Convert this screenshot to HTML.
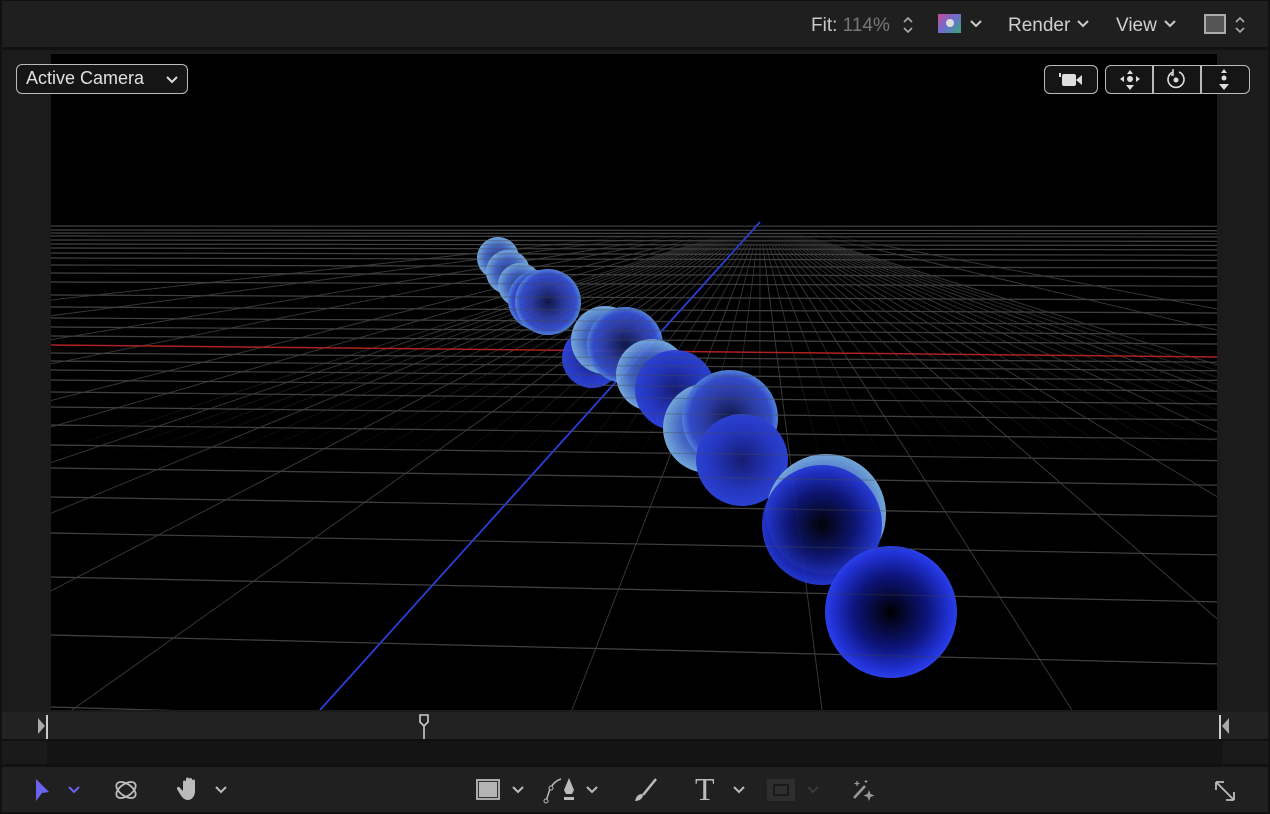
<!DOCTYPE html>
<html><head><meta charset="utf-8"><style>
*{margin:0;padding:0;box-sizing:border-box}
body{width:1270px;height:814px;background:#1d1d1d;position:relative;overflow:hidden;font-family:"Liberation Sans",sans-serif;color:#cfcfcf}
.abs{position:absolute}
</style></head><body>
<!-- top bar -->
<div class="abs" style="left:0;top:0;width:1270px;height:48px;background:#1f1f1f;border-top:1px solid #111;border-left:2px solid #111;border-right:2px solid #111"></div>
<div class="abs" style="left:0;top:47px;width:1270px;height:3px;background:#121212"></div>
<div class="abs" style="left:811px;top:15px;font-size:19px;color:#c9c9c9">Fit: <span style="color:#777">114%</span></div>
<svg class="abs" style="left:902px;top:15px" width="12" height="20"><path d="M2 7l4-4 4 4M2 13l4 4 4-4" stroke="#aaa" stroke-width="1.6" fill="none"/></svg>
<div class="abs" style="left:938px;top:14px;width:23px;height:19px;background:linear-gradient(135deg,#c54a9a,#6a6fd0 50%,#3aa87a)"></div>
<div class="abs" style="left:946px;top:19px;width:8px;height:8px;border-radius:50%;background:#ddd"></div>
<svg class="abs" style="left:969px;top:19px" width="14" height="10"><path d="M2 2l5 5 5-5" stroke="#ccc" stroke-width="2" fill="none"/></svg>
<div class="abs" style="left:1008px;top:15px;font-size:19px;color:#cfcfcf">Render</div>
<svg class="abs" style="left:1076px;top:19px" width="14" height="10"><path d="M2 2l5 5 5-5" stroke="#ccc" stroke-width="2" fill="none"/></svg>
<div class="abs" style="left:1116px;top:15px;font-size:19px;color:#cfcfcf">View</div>
<svg class="abs" style="left:1163px;top:19px" width="14" height="10"><path d="M2 2l5 5 5-5" stroke="#ccc" stroke-width="2" fill="none"/></svg>
<div class="abs" style="left:1204px;top:14px;width:22px;height:20px;border:2px solid #aaa;background:#555"></div>
<svg class="abs" style="left:1234px;top:15px" width="12" height="20"><path d="M2 7l4-4 4 4M2 13l4 4 4-4" stroke="#aaa" stroke-width="1.6" fill="none"/></svg>

<!-- viewer sides -->
<div class="abs" style="left:0;top:50px;width:1270px;height:662px;background:#1b1b1b;border-left:2px solid #111;border-right:2px solid #111"></div>
<svg class="abs" style="left:51px;top:54px" width="1166" height="656" viewBox="51 54 1166 656">
<defs>
<clipPath id="c"><rect x="51" y="224" width="1166" height="486"/></clipPath>
<clipPath id="cv"><rect x="51" y="232" width="1166" height="478"/></clipPath>
<linearGradient id="fade" gradientUnits="userSpaceOnUse" x1="0" y1="232" x2="0" y2="470"><stop offset="0" stop-color="#2e2e2e"/><stop offset="0.4" stop-color="#2c2c2c"/><stop offset="1" stop-color="#2c2c2c" stop-opacity="0"/></linearGradient>
<linearGradient id="topfade" x1="0" y1="0" x2="0" y2="1"><stop offset="0" stop-color="#000"/><stop offset="1" stop-color="#000" stop-opacity="0"/></linearGradient>
<radialGradient id="g1" cx="50%" cy="50%" r="50%"><stop offset="0" stop-color="#000"/><stop offset="0.55" stop-color="#0d147a"/><stop offset="0.9" stop-color="#2233d8"/><stop offset="1" stop-color="#2a40e8"/></radialGradient>
<radialGradient id="g2" cx="50%" cy="50%" r="50%"><stop offset="0" stop-color="#101a50"/><stop offset="0.5" stop-color="#3040b0"/><stop offset="0.85" stop-color="#3a55e0"/><stop offset="1" stop-color="#5a90f0"/></radialGradient>
<radialGradient id="g3" cx="50%" cy="50%" r="50%"><stop offset="0" stop-color="#2a3a90"/><stop offset="0.6" stop-color="#4a70d8"/><stop offset="1" stop-color="#80b8f0"/></radialGradient>
<radialGradient id="g4" cx="50%" cy="50%" r="50%"><stop offset="0" stop-color="#182080"/><stop offset="0.7" stop-color="#2a3ed8"/><stop offset="1" stop-color="#3048e8"/></radialGradient>
</defs>
<rect x="51" y="54" width="1166" height="656" fill="#000"/>
<g clip-path="url(#cv)" fill="none" stroke-width="1">
<path stroke="url(#fade)" d="M760 222L-740.5 710M760 222L-615.5 710M760 222L-553 710M760 222L-490.5 710M760 222L-365.5 710M760 222L-303 710M760 222L-240.5 710M760 222L-115.5 710M760 222L-53 710M760 222L9.5 710M760 222L134.5 710M760 222L197 710M760 222L259.5 710M760 222L384.5 710M760 222L447 710M760 222L509.5 710M760 222L634.5 710M760 222L697 710M760 222L759.5 710M760 222L884.5 710M760 222L947 710M760 222L1009.5 710M760 222L1134.5 710M760 222L1197 710M760 222L1259.5 710M760 222L1384.5 710M760 222L1447 710M760 222L1509.5 710M760 222L1634.5 710M760 222L1697 710M760 222L1759.5 710M760 222L1884.5 710M760 222L1947 710M760 222L2009.5 710M760 222L2134.5 710M760 222L2197 710M760 222L2259.5 710"/>
<path stroke="#363636" d="M760 222L-3678 710M760 222L-2928 710M760 222L-2178 710M760 222L-1678 710M760 222L-1178 710M760 222L-928 710M760 222L-678 710M760 222L-428 710M760 222L-178 710M760 222L72 710M760 222L572 710M760 222L822 710M760 222L1072 710M760 222L1322 710M760 222L1572 710M760 222L1822 710M760 222L2072 710M760 222L2322 710M760 222L2822 710M760 222L3322 710"/>
<rect x="51" y="232" width="1166" height="20" fill="url(#topfade)"/>
</g>
<g clip-path="url(#c)" fill="none">
<path id="rows" stroke="#404040" stroke-width="1.2" d="M51 223L1217 223.1M51 226L1217 226.3M51 230L1217 230.6M51 233L1217 233.8M51 236L1217 237M51 240L1217 241.3M51 244L1217 245.5M51 248L1217 249.8M51 253L1217 255.2M51 258L1217 260.5M51 265L1217 268M51 273L1217 276.6M51 282L1217 286.2M51 295L1217 300.1M51 307L1217 313M51 318L1217 324.7M51 327L1217 334.4M51 336L1217 344M51 353L1217 362.2M51 361L1217 370.7M51 370L1217 380.4M51 380L1217 391.2M51 392L1217 403.9M51 407L1217 420M51 425L1217 439.2M51 445L1217 460.6M51 468L1217 485.2M51 497L1217 516.3M51 533L1217 554.8M51 577L1217 601.9M51 635L1217 663.9M51 707L1217 741"/>
</g>
<line x1="51" y1="345" x2="1217" y2="357" stroke="#b02020" stroke-width="1.5"/>
<line x1="320" y1="710" x2="760" y2="222" stroke="#2a3fd8" stroke-width="1.8"/>
<g opacity="0.9">
<circle cx="498" cy="258" r="21" fill="url(#g3)"/>
<circle cx="508" cy="272" r="22" fill="url(#g3)"/>
<circle cx="520" cy="285" r="22" fill="url(#g3)"/>
<circle cx="538" cy="300" r="30" fill="url(#g2)"/>
<circle cx="548" cy="302" r="33" fill="url(#g2)"/>
<circle cx="592" cy="358" r="30" fill="url(#g4)"/>
<circle cx="605" cy="340" r="34" fill="url(#g3)"/>
<circle cx="625" cy="345" r="38" fill="url(#g2)"/>
<circle cx="652" cy="375" r="36" fill="url(#g3)"/>
<circle cx="675" cy="390" r="40" fill="url(#g4)"/>
<circle cx="708" cy="428" r="45" fill="url(#g3)"/>
<circle cx="730" cy="418" r="48" fill="url(#g2)"/>
<circle cx="742" cy="460" r="46" fill="url(#g4)"/>
<circle cx="826" cy="514" r="60" fill="url(#g3)"/>
<circle cx="822" cy="525" r="60" fill="url(#g1)" opacity="0.95"/>
</g>
<circle cx="891" cy="612" r="66" fill="url(#g1)"/>
<use href="#rows" clip-path="url(#c)" opacity="0.35"/>
</svg>

<!-- Active camera -->
<div class="abs" style="left:16px;top:64px;width:172px;height:30px;border:1.5px solid #bbb;border-radius:6px;background:#151515"></div>
<div class="abs" style="left:26px;top:68px;font-size:18px;color:#e0e0e0">Active Camera</div>
<svg class="abs" style="left:165px;top:75px" width="14" height="10"><path d="M2 2l5 5 5-5" stroke="#ddd" stroke-width="2" fill="none"/></svg>

<!-- camera buttons -->
<div class="abs" style="left:1044px;top:65px;width:54px;height:29px;border:1.5px solid #bbb;border-radius:6px;background:#151515"></div>
<svg class="abs" style="left:1058px;top:72px" width="28" height="16"><rect x="1" y="1" width="2" height="4" fill="#ddd"/><rect x="4" y="2" width="14" height="12" rx="2" fill="#ddd"/><path d="M18 8l6-5v10z" fill="#ddd"/></svg>
<div class="abs" style="left:1105px;top:65px;width:145px;height:29px;border:1.5px solid #bbb;border-radius:6px;background:#151515"></div>
<div class="abs" style="left:1152px;top:65px;width:1.5px;height:29px;background:#bbb"></div>
<div class="abs" style="left:1200px;top:65px;width:1.5px;height:29px;background:#bbb"></div>
<svg class="abs" style="left:1116px;top:67px" width="28" height="26"><circle cx="14" cy="12" r="3" fill="#ddd"/><path d="M14 3l-3 4h6zM14 23l-4-5h8zM4 12l4-3v6zM24 12l-4-3v6z" fill="#ddd"/></svg>
<svg class="abs" style="left:1164px;top:67px" width="24" height="24"><circle cx="12" cy="13" r="2.5" fill="#ddd"/><path d="M9 5a8 8 0 1 0 6 0" stroke="#ddd" stroke-width="1.6" fill="none"/><path d="M9 2v6h-2" stroke="#ddd" stroke-width="1.5" fill="none"/></svg>
<svg class="abs" style="left:1214px;top:67px" width="20" height="26"><circle cx="10" cy="11" r="2.5" fill="#ddd"/><path d="M10 2l-3 4h6zM10 23l-5-6h10z" fill="#ddd"/></svg>

<!-- timeline -->
<div class="abs" style="left:0;top:712px;width:1270px;height:27px;background:#222;border-left:2px solid #111;border-right:2px solid #111"></div>
<div class="abs" style="left:0;top:739px;width:1270px;height:2px;background:#111"></div>
<div class="abs" style="left:0;top:741px;width:1270px;height:24px;background:#1a1a1a;border-left:2px solid #111;border-right:2px solid #111"></div>
<div class="abs" style="left:47px;top:741px;width:1176px;height:24px;background:#141414"></div>
<div class="abs" style="left:0;top:764px;width:1270px;height:3px;background:#111"></div>
<svg class="abs" style="left:36px;top:715px" width="14" height="24"><path d="M2 3l7 8-7 8z" fill="#aaa"/><rect x="10" y="0" width="2" height="24" fill="#ccc"/></svg>
<svg class="abs" style="left:1218px;top:715px" width="14" height="24"><rect x="1" y="0" width="2" height="24" fill="#ccc"/><path d="M11 3l-7 8 7 8z" fill="#aaa"/></svg>
<svg class="abs" style="left:417px;top:714px" width="16" height="26"><path d="M3 1h8v7l-4 4-4-4z" stroke="#ccc" stroke-width="1.6" fill="none"/><rect x="6.2" y="11" width="1.6" height="14" fill="#ccc"/></svg>

<!-- bottom toolbar -->
<div class="abs" style="left:0;top:767px;width:1270px;height:47px;background:#202020;border-left:2px solid #111;border-right:2px solid #111;border-bottom:2px solid #111"></div>
<svg class="abs" style="left:34px;top:778px" width="16" height="24"><path d="M2 1l13 13-7 1-6 8z" fill="#6a63f0"/></svg>
<svg class="abs" style="left:67px;top:785px" width="14" height="10"><path d="M2 2l5 5 5-5" stroke="#6a63f0" stroke-width="2" fill="none"/></svg>
<svg class="abs" style="left:112px;top:776px" width="28" height="28"><ellipse cx="14" cy="14" rx="11" ry="6" stroke="#bbb" stroke-width="1.8" fill="none" transform="rotate(35 14 14)"/><ellipse cx="14" cy="14" rx="11" ry="6" stroke="#bbb" stroke-width="1.8" fill="none" transform="rotate(-35 14 14)"/></svg>
<svg class="abs" style="left:177px;top:776px" width="26" height="26"><path d="M6 10v-4a1.5 1.5 0 0 1 3 0v5V3a1.5 1.5 0 0 1 3 0v8V3.5a1.5 1.5 0 0 1 3 0V11V5a1.5 1.5 0 0 1 3 0v10c0 5-3 9-7 9s-6-3-8-6l-3-5a1.5 1.5 0 0 1 3-1l3 3z" fill="#bbb"/></svg>
<svg class="abs" style="left:214px;top:785px" width="14" height="10"><path d="M2 2l5 5 5-5" stroke="#bbb" stroke-width="2" fill="none"/></svg>
<div class="abs" style="left:476px;top:779px;width:24px;height:21px;border:2px solid #aaa;background:#b4b4b4;box-shadow:inset 0 0 0 1px #333"></div>
<svg class="abs" style="left:511px;top:785px" width="14" height="10"><path d="M2 2l5 5 5-5" stroke="#bbb" stroke-width="2" fill="none"/></svg>
<svg class="abs" style="left:543px;top:776px" width="34" height="28"><path d="M3 25l4-12q4-8 11-10" stroke="#bbb" stroke-width="1.5" fill="none"/><circle cx="3" cy="25" r="2" stroke="#bbb" fill="#202020"/><circle cx="8" cy="12" r="2" stroke="#bbb" fill="#202020"/><path d="M26 2l-5 12 2 4h6l2-4z" fill="#bbb"/><rect x="21" y="21" width="10" height="3" fill="#bbb"/></svg>
<svg class="abs" style="left:585px;top:785px" width="14" height="10"><path d="M2 2l5 5 5-5" stroke="#bbb" stroke-width="2" fill="none"/></svg>
<svg class="abs" style="left:631px;top:777px" width="28" height="26"><path d="M25 2L12 18" stroke="#bbb" stroke-width="2.5"/><path d="M11 17c-4 0-6 3-7 7 4 0 7-2 8-5z" fill="#bbb"/></svg>
<div class="abs" style="left:695px;top:771px;font-family:'Liberation Serif',serif;font-size:32px;color:#bbb">T</div>
<svg class="abs" style="left:732px;top:785px" width="14" height="10"><path d="M2 2l5 5 5-5" stroke="#bbb" stroke-width="2" fill="none"/></svg>
<div class="abs" style="left:767px;top:779px;width:28px;height:22px;background:#2e2e2e"></div>
<div class="abs" style="left:773px;top:784px;width:16px;height:12px;border:2px solid #1a1a1a"></div>
<svg class="abs" style="left:806px;top:785px" width="14" height="10"><path d="M2 2l5 5 5-5" stroke="#3a3a3a" stroke-width="2" fill="none"/></svg>
<svg class="abs" style="left:851px;top:778px" width="26" height="24"><path d="M3 20L14 8" stroke="#999" stroke-width="2.5"/><path d="M18 12l1.5 4 4 1.5-4 1.5-1.5 4-1.5-4-4-1.5 4-1.5z" fill="#999"/><path d="M6 3v5M3.5 5.5h5" stroke="#999" stroke-width="1.2"/><path d="M15 2v3M13.5 3.5h3" stroke="#999" stroke-width="1"/></svg>
<svg class="abs" style="left:1213px;top:779px" width="26" height="26"><path d="M3 3l18 18M3 3v8M3 3h8M21 21v-8M21 21h-8" stroke="#bbb" stroke-width="1.8" fill="none"/></svg>
</body></html>
